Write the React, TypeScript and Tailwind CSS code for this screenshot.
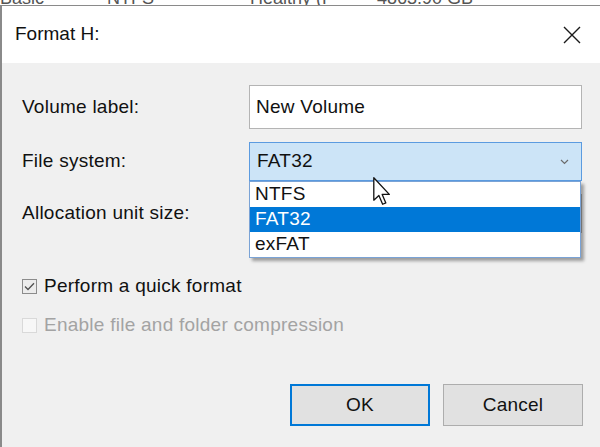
import React from 'react'

const font = { fontFamily: '"Liberation Sans", Arial, sans-serif' }

const CloseIcon = () => (
  <svg width="18" height="18" viewBox="0 0 18 18" className="text-[#1a1a1a]">
    <path d="M1 1 L17 17 M17 1 L1 17" stroke="currentColor" strokeWidth="1.4" fill="none" />
  </svg>
)

const Cursor = () => (
  <svg width="19" height="29" viewBox="0 0 13 20" className="absolute left-[124px] top-[35px] z-20">
    <path
      d="M0.5 0.5 L0.5 16 L4 12.8 L6.6 18.8 L8.8 17.9 L6.3 12 L11.2 12 Z"
      fill="#fff"
      stroke="#111"
      strokeWidth="0.9"
      strokeLinejoin="round"
    />
  </svg>
)

const Chevron = () => (
  <svg width="9" height="6" viewBox="0 0 9 6">
    <path d="M1 1 L4.5 4.5 L8 1" stroke="#6b6b6b" strokeWidth="1.2" fill="none" />
  </svg>
)

const Checkbox: React.FC<{ checked?: boolean; disabled?: boolean }> = ({ checked, disabled }) => (
  <span
    className={`w-[15px] h-[15px] flex items-center justify-center border ${
      disabled ? 'border-[#d9d9d9] bg-[#f7f7f7]' : 'border-[#8c8c8c] bg-[#ececec]'
    }`}
  >
    {checked && (
      <svg width="11" height="9" viewBox="0 0 11 9">
        <path d="M1 4.5 L4 7.5 L10 1.2" stroke="#505050" strokeWidth="1.3" fill="none" />
      </svg>
    )}
  </span>
)

export default function App() {
  return (
    <div className="w-[600px] h-[447px] overflow-hidden bg-[#f0f0f0] flex flex-col text-[#111]" style={font}>
      {/* table behind the dialog, mostly hidden */}
      <div className="h-[5px] overflow-hidden bg-white text-[18px] text-[#555] flex">
        <div className="-mt-[15px] flex whitespace-nowrap">
          <span className="w-[107px]">Basic</span>
          <span className="w-[143px]">NTFS</span>
          <span className="w-[127px]">Healthy (P</span>
          <span>4863.90 GB</span>
        </div>
      </div>

      <div className="flex-1 flex flex-col border-t border-l-2 border-[#8a8a8a]">
        <div className="h-[57px] bg-white flex items-center justify-between pl-[13px] pr-[19px]">
          <span className="text-[19px]">Format H:</span>
          <CloseIcon />
        </div>

        <div className="flex-1 flex flex-col pt-[22px] text-[19px] tracking-[0.25px]">
          <div className="grid grid-cols-[227px_333px] pl-[20px] items-center">
            <span>Volume label:</span>
            <div className="h-[44px] bg-white border border-[#b4b4b4] flex items-center px-[6px]">
              New Volume
            </div>
          </div>

          <div className="grid grid-cols-[227px_333px] pl-[20px] items-center mt-[13px]">
            <span>File system:</span>
            <div className="relative">
              <div className="h-[39px] bg-[#cce4f7] border border-[#5b9be0] flex items-center justify-between pl-[7px] pr-[12px]">
                <span>FAT32</span>
                <Chevron />
              </div>
              <div className="absolute left-0 top-full w-[332px] bg-white border border-[#7aa3d6] shadow-[3px_3px_3px_rgba(0,0,0,0.35)] z-10 flex flex-col">
                <div className="h-[25px] flex items-center px-[5px]">NTFS</div>
                <div className="h-[25px] flex items-center px-[5px] bg-[#0078d7] text-white">FAT32</div>
                <div className="h-[25px] flex items-center px-[5px]">exFAT</div>
              </div>
              <Cursor />
            </div>
          </div>

          <div className="grid grid-cols-[227px_333px] pl-[20px] items-center mt-[13px]">
            <span>Allocation unit size:</span>
            <div className="h-[39px] bg-[#e1e1e1] border border-[#adadad]" />
          </div>

          <div className="flex items-center gap-[7px] pl-[20px] h-[26px] mt-[40px]">
            <Checkbox checked />
            <span>Perform a quick format</span>
          </div>
          <div className="flex items-center gap-[7px] pl-[20px] h-[26px] mt-[13px] text-[#a3a3a3]">
            <Checkbox disabled />
            <span>Enable file and folder compression</span>
          </div>

          <div className="flex justify-end gap-[13px] pr-[17px] mt-[46px]">
            <button className="w-[140px] h-[42px] bg-[#e1e1e1] border-2 border-[#0078d7]">OK</button>
            <button className="w-[140px] h-[42px] bg-[#e1e1e1] border border-[#adadad]">Cancel</button>
          </div>
        </div>
      </div>
    </div>
  )
}
